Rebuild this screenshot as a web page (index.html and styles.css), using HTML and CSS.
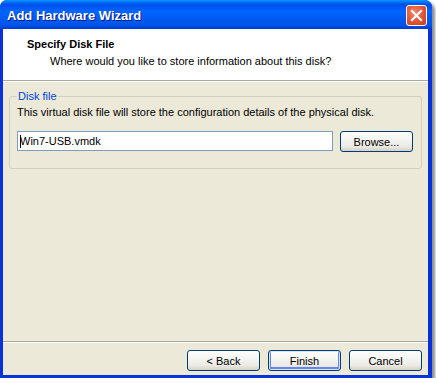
FILE: index.html
```html
<!DOCTYPE html>
<html lang="en">
<head>
  <meta charset="UTF-8">
  <title>Add Hardware Wizard</title>
  <link rel="stylesheet" href="styles.css">
</head>
<body>
  <div class="window">
    <div class="titlebar">
      <span class="title">Add Hardware Wizard</span>
      <button class="close" aria-label="Close">
        <svg width="13" height="13" viewBox="0 0 13 13">
          <path d="M2 2 L11 11 M11 2 L2 11" stroke="#fff" stroke-width="2.2" stroke-linecap="square"/>
        </svg>
      </button>
    </div>
    <div class="client">
      <div class="header">
        <div class="header-title">Specify Disk File</div>
        <div class="header-sub">Where would you like to store information about this disk?</div>
      </div>
      <div class="content">
        <fieldset class="group">
          <legend>Disk file</legend>
          <p class="desc">This virtual disk file will store the configuration details of the physical disk.</p>
          <div class="file-row">
            <div class="textbox"><span class="caret"></span>Win7-USB.vmdk</div>
            <button class="btn">Browse...</button>
          </div>
        </fieldset>
      </div>
      <div class="footer">
        <button class="btn">&lt; Back</button>
        <button class="btn default">Finish</button>
        <button class="btn cancel">Cancel</button>
      </div>
    </div>
  </div>
</body>
</html>
```

FILE: styles.css
```css
* { margin: 0; padding: 0; box-sizing: border-box; }
body {
  background: #fff;
  font-family: 'Liberation Sans', Arial, sans-serif;
  font-size: 11px;
  color: #000;
}
.window {
  width: 432px;
  height: 378px;
  display: flex;
  flex-direction: column;
  border-radius: 7px 7px 0 0;
  background: #0831d9;
  box-shadow: 3px 3px 3px rgba(0, 0, 0, 0.45);
}
.titlebar {
  height: 29px;
  flex: none;
  display: flex;
  align-items: center;
  justify-content: space-between;
  padding: 0 5px 0 7px;
  border-radius: 7px 7px 0 0;
  background: linear-gradient(to bottom, #0997ff 0, #0053ee 4px, #0050ee 6px, #06f 11px, #0058ee 20px, #0055ea 25px, #0040d4 28px, #0a3bcb 29px);
}
.title {
  font-weight: bold;
  font-size: 13px;
  color: #fff;
  text-shadow: 1px 1px 0 #0a1883;
  padding-top: 1px;
}
.close {
  width: 21px;
  height: 21px;
  border: 1px solid #fff;
  border-radius: 3px;
  background: radial-gradient(circle at 40% 35%, #f08a6c 0, #e45b3d 45%, #c73a1d 100%);
  display: flex;
  align-items: center;
  justify-content: center;
  margin-top: 2px;
}
.client {
  flex: 1;
  margin: 0 4px 3px 3px;
  background: #ece9d8;
  display: flex;
  flex-direction: column;
}
.header {
  height: 52px;
  background: #fff;
  border-bottom: 1px solid #aca899;
  box-shadow: 0 1px 0 #fff;
  padding: 8px 0 0 24px;
}
.header-title {
  font-weight: bold;
  line-height: 14px;
}
.header-sub {
  line-height: 14px;
  margin-top: 3px;
  padding-left: 23px;
}
.content {
  flex: 1;
  padding: 9px 6px 0 6px;
}
.group {
  border: 1px solid #d0d0bf;
  border-radius: 3px;
  padding: 2px 8px 13px 7px;
  height: 79px;
}
.group legend {
  color: #0046d5;
  padding: 0 1px;
  margin-left: 0;
  line-height: 13px;
}
.desc {
  line-height: 14px;
}
.file-row {
  display: flex;
  gap: 7px;
  margin-top: 12px;
}
.textbox {
  width: 316px;
  height: 20px;
  border: 1px solid #7f9db9;
  background: #fff;
  padding: 3px 0 0 2px;
  line-height: 13px;
  display: flex;
  align-items: flex-start;
}
.caret {
  width: 1px;
  height: 13px;
  background: #000;
  margin-right: -1px;
}
.btn {
  width: 73px;
  height: 21px;
  font-family: inherit;
  font-size: 11px;
  color: #000;
  border: 1px solid #003c74;
  border-radius: 3px;
  background: linear-gradient(to bottom, #fff 0, #f4f4f0 40%, #ecebe6 75%, #d6d0c5 100%);
}
.btn.default {
  box-shadow: inset 0 0 0 1px #cee7ff, inset 0 -1px 0 2px #6982ee;
}
.footer {
  height: 34px;
  flex: none;
  border-top: 1px solid #aca899;
  box-shadow: inset 0 1px 0 #fff;
  display: flex;
  gap: 8px;
  justify-content: flex-end;
  padding: 8px 6px 0 0;
}
```
